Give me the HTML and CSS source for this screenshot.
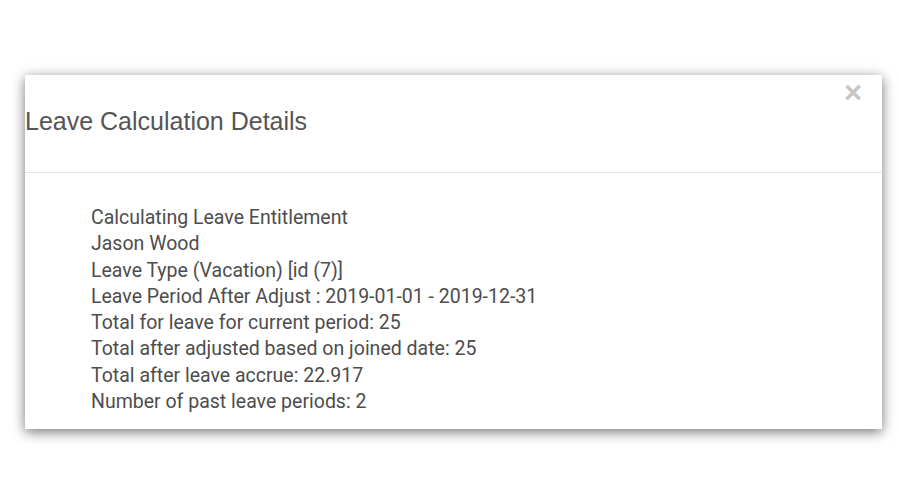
FILE: index.html
```html
<!DOCTYPE html>
<html>
<head>
<meta charset="utf-8">
<link rel="stylesheet" href="styles.css">
</head>
<body>
<div class="page">
  <div class="modal">
    <div class="modal-header">
      <h4 class="modal-title">Leave Calculation Details</h4>
      <span class="close">×</span>
    </div>
    <div class="modal-body">
      <div class="line">Calculating Leave Entitlement</div>
      <div class="line">Jason Wood</div>
      <div class="line">Leave Type (Vacation) [id (7)]</div>
      <div class="line">Leave Period After Adjust : 2019-01-01 - 2019-12-31</div>
      <div class="line">Total for leave for current period: 25</div>
      <div class="line">Total after adjusted based on joined date: 25</div>
      <div class="line">Total after leave accrue: 22.917</div>
      <div class="line">Number of past leave periods: 2</div>
    </div>
  </div>
</div>
</body>
</html>
```
FILE: styles.css
```css
html, body {
  margin: 0;
  padding: 0;
  background: #fff;
}
body {
  min-height: 500px;
}
.page {
  padding: 75px 18px 0 25px;
}
.modal {
  width: 857px;
  height: 354px;
  box-sizing: border-box;
  background: #fff;
  box-shadow: 0 3px 12px rgba(0,0,0,0.55);
  display: flex;
  flex-direction: column;
}
.modal-header {
  position: relative;
  height: 98px;
  box-sizing: border-box;
  border-bottom: 1px solid #e5e5e5;
  display: flex;
  align-items: center;
}
.modal-title {
  margin: 0;
  padding-bottom: 4px;
  font-family: "Liberation Sans", Arial, sans-serif;
  font-weight: normal;
  font-size: 25px;
  color: #555;
}
.close {
  position: absolute;
  top: 2px;
  right: 20px;
  font-family: "Liberation Sans", Arial, sans-serif;
  font-size: 31px;
  font-weight: bold;
  line-height: 1;
  color: #000;
  opacity: 0.22;
}
.modal-body {
  padding: 32px 0 0 66px;
  font-family: Roboto, sans-serif;
  font-size: 19.5px;
  line-height: 26.3px;
  color: #4d4d4d;
}
```
